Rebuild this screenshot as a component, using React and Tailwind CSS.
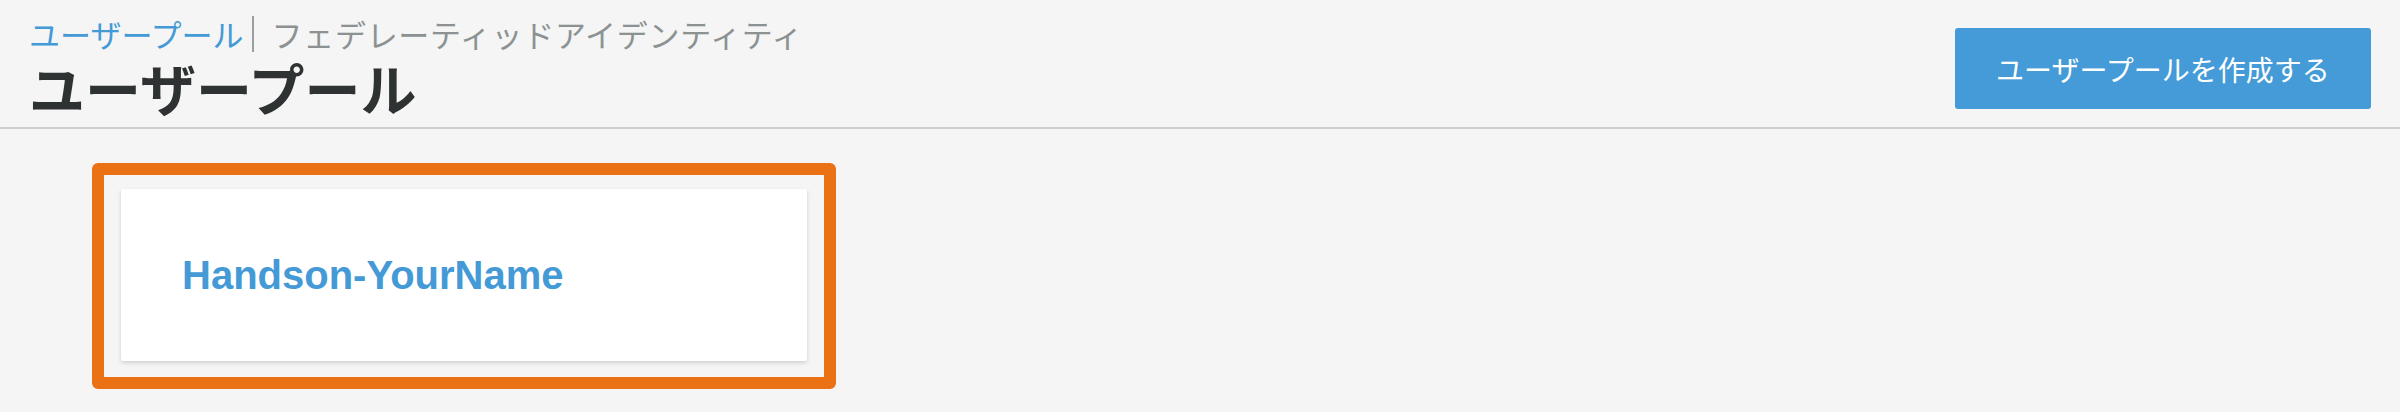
export default function App() {
  const jp = { fontFamily: '"Noto Sans CJK JP", "Noto Sans", sans-serif' }
  return (
    <div className="w-[2400px] h-[412px] bg-[#f4f5f4] overflow-hidden" style={jp}>
      <header className="h-[129px] border-b-2 border-[#cdcfcf] flex justify-between pl-[29px] pr-[29px]">
        <div className="pt-[15px]">
          <div className="flex items-center h-[38px] text-[31px] leading-[38px]">
            <span className="text-[#449ad6]">ユーザープール</span>
            <span className="w-[2px] h-[36px] bg-[#9aa0a0] ml-[8px] mr-[18px]" />
            <span className="text-[#8c9292] tracking-[0.7px]">フェデレーティッドアイデンティティ</span>
          </div>
          <h1 className="mt-[2px] text-[56px] leading-[64px] font-bold text-[#2f3232]">ユーザープール</h1>
        </div>
        <button className="mt-[28px] w-[416px] h-[81px] rounded-[3px] bg-[#449bd7] text-white text-[28px] leading-none">
          ユーザープールを作成する
        </button>
      </header>
      <div className="pl-[92px] pt-[34px]">
        <div className="w-[744px] h-[226px] border-[12px] border-[#ea7114] rounded-[6px] pl-[17px] pt-[14px]">
          <div className="w-[686px] h-[172px] bg-white rounded-[2px] shadow-[0_2px_4px_rgba(0,0,0,0.15)] flex items-center pl-[61px]">
            <span className="text-[40px] font-bold text-[#449ad6] leading-none" style={{ fontFamily: '"Liberation Sans", Arial, sans-serif' }}>
              Handson-YourName
            </span>
          </div>
        </div>
      </div>
    </div>
  )
}
